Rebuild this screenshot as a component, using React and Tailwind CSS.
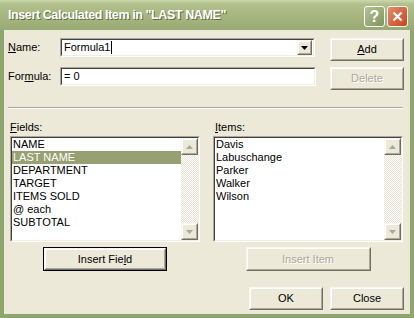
const FIELDS = ['NAME', 'LAST NAME', 'DEPARTMENT', 'TARGET', 'ITEMS SOLD', '@ each', 'SUBTOTAL']
const ITEMS = ['Davis', 'Labuschange', 'Parker', 'Walker', 'Wilson']

function Sunken({ className = '', children }) {
  return (
    <div className={`border border-t-[#aca899] border-l-[#aca899] border-r-white border-b-white ${className}`}>
      <div className="h-full border border-t-[#404040] border-l-[#404040] border-r-[#f1efe2] border-b-[#f1efe2] bg-white">
        {children}
      </div>
    </div>
  )
}

function Raised({ className = '', children }) {
  return (
    <div className={`border border-t-[#f8f7f2] border-l-[#f8f7f2] border-r-[#716f64] border-b-[#716f64] ${className}`}>
      <div className="h-full flex items-center justify-center border border-t-white border-l-white border-r-[#aca899] border-b-[#aca899] bg-[#ece9d8]">
        {children}
      </div>
    </div>
  )
}

function Btn({ children, className = '', disabled, isDefault }) {
  const label = (
    <span className={disabled ? 'text-[#aca899] [text-shadow:1px_1px_0_#fff]' : 'text-black'}>{children}</span>
  )
  if (isDefault) {
    return (
      <div className={`border border-black ${className}`}>
        <Raised className="h-full">{label}</Raised>
      </div>
    )
  }
  return <Raised className={className}>{label}</Raised>
}

function Arrow({ up, dark }) {
  return (
    <svg width="7" height="4" viewBox="0 0 7 4">
      <polygon points={up ? '3.5,0 7,4 0,4' : '0,0 7,0 3.5,4'} fill={dark ? '#000' : '#aca899'} />
    </svg>
  )
}

function Scrollbar() {
  return (
    <div className="w-[17px] h-full flex flex-col bg-[repeating-conic-gradient(#ffffff_0%_25%,#e6e3d4_0%_50%)] bg-[length:2px_2px]">
      <Raised className="h-[17px] shrink-0"><Arrow up /></Raised>
      <div className="flex-1" />
      <Raised className="h-[17px] shrink-0"><Arrow /></Raised>
    </div>
  )
}

function ListBox({ rows, selected }) {
  return (
    <Sunken className="w-[190px] h-[106px]">
      <div className="flex h-full">
        <ul className="flex-1">
          {rows.map((r) => (
            <li
              key={r}
              className={`h-[13px] leading-[13px] pl-[1px] whitespace-nowrap ${r === selected ? 'bg-[#97a073] text-white' : 'text-black'}`}
            >
              {r}
            </li>
          ))}
        </ul>
        <Scrollbar />
      </div>
    </Sunken>
  )
}

export default function App() {
  return (
    <div className="w-[414px] h-[318px] flex flex-col bg-[#8fa56e] font-[family-name:'Liberation_Sans',Arial,sans-serif] text-[11px] text-black overflow-hidden">
      {/* title bar */}
      <div className="h-[30px] shrink-0 flex items-center pl-[8px] pr-[6px] bg-[linear-gradient(#cdd7ae_0px,#b2c18c_4px,#a6b680_16px,#98aa74_30px)]">
        <div className="flex-1 text-white font-bold text-[12.5px] tracking-[-0.4px] [text-shadow:1px_1px_0_#5f6f40] whitespace-nowrap">
          Insert Calculated Item in "LAST NAME"
        </div>
        <div className="flex gap-[2px] mt-[3px]">
          <div className="w-[21px] h-[21px] rounded-[3px] border border-white bg-[linear-gradient(135deg,#b4c38f,#7f9560)] flex items-center justify-center text-white font-bold text-[16px] leading-none">
            ?
          </div>
          <div className="w-[21px] h-[21px] rounded-[3px] border border-white bg-[linear-gradient(135deg,#e88a6a,#c5461f)] flex items-center justify-center">
            <svg width="11" height="11" viewBox="0 0 11 11">
              <path d="M1.5 1.5 L9.5 9.5 M9.5 1.5 L1.5 9.5" stroke="#fff" strokeWidth="2.2" />
            </svg>
          </div>
        </div>
      </div>

      {/* body */}
      <div className="flex-1 ml-[4px] mr-[4px] mb-[4px] bg-[#ece9d8] pl-[4px] pr-[6px] pt-[8px]">
        <div className="flex items-start">
          <div className="w-[52px] h-[19px] flex items-center">
            <span><span className="underline">N</span>ame:</span>
          </div>
          <Sunken className="w-[255px] h-[19px]">
            <div className="flex h-full items-center">
              <div className="flex-1 pl-[2px] flex items-center">
                Formula1<span className="inline-block w-px h-[13px] bg-black ml-[1px]" />
              </div>
              <Raised className="w-[15px] h-[15px] mr-[1px]"><Arrow dark /></Raised>
            </div>
          </Sunken>
          <Btn className="ml-[15px] w-[74px] h-[23px]">
            <span className="underline">A</span>dd
          </Btn>
        </div>

        <div className="flex items-start mt-[6px]">
          <div className="w-[52px] h-[19px] flex items-center">
            <span>For<span className="underline">m</span>ula:</span>
          </div>
          <Sunken className="w-[256px] h-[19px]">
            <div className="h-full flex items-center pl-[2px]">= 0</div>
          </Sunken>
          <Btn disabled className="ml-[14px] w-[74px] h-[23px]">Delete</Btn>
        </div>

        <div className="mt-[17px] w-[395px] border-t border-t-[#aca899] border-b border-b-white" />

        <div className="flex mt-[12px] pl-[2px]">
          <div className="w-[190px]">
            <div className="h-[13px] leading-[13px] mb-[2px]"><span className="underline">F</span>ields:</div>
            <ListBox rows={FIELDS} selected="LAST NAME" />
            <div className="flex justify-center mt-[5px]">
              <Btn isDefault className="w-[124px] h-[24px]">
                Insert Fie<span className="underline">l</span>d
              </Btn>
            </div>
          </div>
          <div className="w-[190px] ml-[13px]">
            <div className="h-[13px] leading-[13px] mb-[2px] pl-[2px]"><span className="underline">I</span>tems:</div>
            <ListBox rows={ITEMS} />
            <div className="flex justify-center mt-[5px]">
              <Btn disabled className="w-[125px] h-[24px]">Insert Item</Btn>
            </div>
          </div>
        </div>

        <div className="flex justify-end gap-[7px] mt-[16px]">
          <Btn className="w-[74px] h-[23px]">OK</Btn>
          <Btn className="w-[74px] h-[23px]">Close</Btn>
        </div>
      </div>
    </div>
  )
}
